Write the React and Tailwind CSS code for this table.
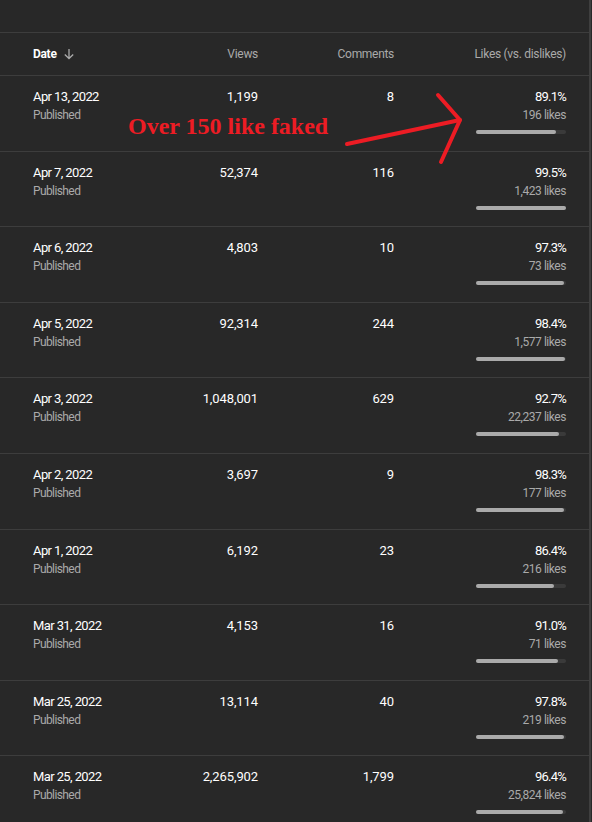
import React from "react";

const rows = [
  { date: "Apr 13, 2022", views: "1,199", comments: "8", pct: 89.1, likes: "196" },
  { date: "Apr 7, 2022", views: "52,374", comments: "116", pct: 99.5, likes: "1,423" },
  { date: "Apr 6, 2022", views: "4,803", comments: "10", pct: 97.3, likes: "73" },
  { date: "Apr 5, 2022", views: "92,314", comments: "244", pct: 98.4, likes: "1,577" },
  { date: "Apr 3, 2022", views: "1,048,001", comments: "629", pct: 92.7, likes: "22,237" },
  { date: "Apr 2, 2022", views: "3,697", comments: "9", pct: 98.3, likes: "177" },
  { date: "Apr 1, 2022", views: "6,192", comments: "23", pct: 86.4, likes: "216" },
  { date: "Mar 31, 2022", views: "4,153", comments: "16", pct: 91.0, likes: "71" },
  { date: "Mar 25, 2022", views: "13,114", comments: "40", pct: 97.8, likes: "219" },
  { date: "Mar 25, 2022", views: "2,265,902", comments: "1,799", pct: 96.4, likes: "25,824" },
];

function Row({ row }) {
  return (
    <div className="flex h-[75.6px] border-b border-[#3d3d3d] pl-[33px] pr-[22px] pt-[12px] text-[13px] leading-[18px] tracking-[-0.4px] text-white">
      <div className="w-[145px] tracking-[-0.6px]">
        <div>{row.date}</div>
        <div className="text-[12px] text-[#aaaaaa]">Published</div>
      </div>
      <div className="w-[80px] text-right tracking-[-0.1px]">{row.views}</div>
      <div className="w-[136px] text-right tracking-[-0.1px]">{row.comments}</div>
      <div className="flex w-[172px] flex-col items-end">
        <div className="tracking-[-0.8px]">{row.pct.toFixed(1)}%</div>
        <div className="text-[12px] tracking-[-0.45px] text-[#aaaaaa]">{row.likes} likes</div>
        <div className="mt-[6px] h-[4px] w-[90px] rounded-full bg-[#3a3a3a]">
          <div className="h-full rounded-full bg-[#aaaaaa]" style={{ width: `${row.pct}%` }} />
        </div>
      </div>
    </div>
  );
}

export default function App() {
  return (
    <div className="relative h-[822px] w-[592px] overflow-hidden bg-[#282828] font-['Roboto',sans-serif]">
      <div className="flex h-full">
        <div className="w-[589px]">
          {/* empty strip above the table */}
          <div className="h-[32px]" />

          {/* header */}
          <div className="flex h-[44px] items-center border-y border-[#3d3d3d] pl-[33px] pr-[22px] text-[12px] tracking-[-0.3px] text-[#aaaaaa]">
            <div className="flex w-[145px] items-center gap-[6px] font-bold text-white">
              Date
              <svg className="h-[12px] w-[12px]" viewBox="0 0 12 12" fill="none" stroke="#aaaaaa" strokeWidth="1.3">
                <path d="M6 1v9.5M1.8 6.5 6 10.5l4.2-4" />
              </svg>
            </div>
            <div className="w-[80px] text-right">Views</div>
            <div className="w-[136px] text-right">Comments</div>
            <div className="w-[172px] text-right">Likes (vs. dislikes)</div>
          </div>

          {rows.map((row, i) => (
            <Row key={i} row={row} />
          ))}
        </div>
        <div className="w-[2px] bg-[#3f3f3f]" />
      </div>

      {/* red annotation drawn over the screenshot */}
      <div className="absolute left-[128px] top-[111px] font-['Liberation_Serif',serif] text-[24px] font-bold leading-[30px] text-[#ed1c24]">
        Over 150 like faked
      </div>
      <svg className="absolute left-0 top-0" width="592" height="822" fill="none" stroke="#ed1c24" strokeWidth="4" strokeLinecap="round" strokeLinejoin="round">
        <path d="M347 144 L460 120" />
        <path d="M438 95 L460 120 L441 162" />
      </svg>
    </div>
  );
}
